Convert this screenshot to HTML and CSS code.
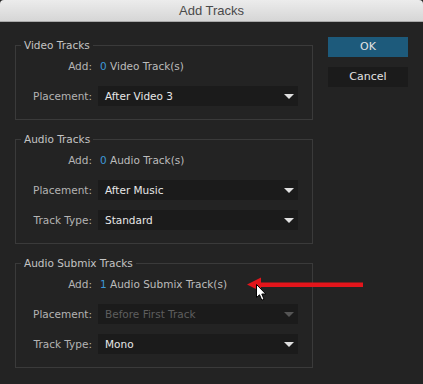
FILE: index.html
```html
<!DOCTYPE html>
<html>
<head>
<meta charset="utf-8">
<title>Add Tracks</title>
<link rel="stylesheet" href="styles.css">
</head>
<body>
<div class="window">
  <div class="titlebar">Add Tracks</div>
  <div class="content">
    <div class="panels">
      <fieldset class="group">
        <legend>Video Tracks</legend>
        <div class="row add-row">
          <span class="label">Add:</span>
          <span class="value"><span class="num">0</span> Video Track(s)</span>
        </div>
        <div class="row">
          <span class="label">Placement:</span>
          <div class="select"><span>After Video 3</span><span class="caret"></span></div>
        </div>
      </fieldset>
      <fieldset class="group">
        <legend>Audio Tracks</legend>
        <div class="row add-row">
          <span class="label">Add:</span>
          <span class="value"><span class="num">0</span> Audio Track(s)</span>
        </div>
        <div class="row">
          <span class="label">Placement:</span>
          <div class="select"><span>After Music</span><span class="caret"></span></div>
        </div>
        <div class="row">
          <span class="label">Track Type:</span>
          <div class="select"><span>Standard</span><span class="caret"></span></div>
        </div>
      </fieldset>
      <fieldset class="group">
        <legend>Audio Submix Tracks</legend>
        <div class="row add-row">
          <span class="label">Add:</span>
          <span class="value"><span class="num">1</span> Audio Submix Track(s)</span>
          <svg class="arrow" width="117" height="16" viewBox="0 0 117 16"><path d="M0 7.5 L14 0.5 L14 5.5 L116 5.5 L116 10 L14 10 L14 14.5 Z" fill="#e3151b"/></svg>
          <svg class="pointer" width="12" height="18" viewBox="0 0 12 18"><path d="M0.5 0.5 L0.5 13.5 L3.5 10.8 L5.8 16.2 L8 15.2 L5.8 10 L9.8 10 Z" fill="#fff" stroke="#000" stroke-width="1"/></svg>
        </div>
        <div class="row">
          <span class="label">Placement:</span>
          <div class="select disabled"><span>Before First Track</span><span class="caret"></span></div>
        </div>
        <div class="row">
          <span class="label">Track Type:</span>
          <div class="select"><span>Mono</span><span class="caret"></span></div>
        </div>
      </fieldset>
    </div>
    <div class="buttons">
      <div class="btn primary">OK</div>
      <div class="btn">Cancel</div>
    </div>
  </div>
</div>
</body>
</html>
```

FILE: styles.css
```css
* { box-sizing: border-box; }
html, body {
  margin: 0;
  padding: 0;
  width: 423px;
  height: 384px;
  overflow: hidden;
  background: #232323;
}
.window {
  width: 423px;
  height: 384px;
  background: #232323;
  font-family: "DejaVu Sans", "Liberation Sans", sans-serif;
  font-size: 10.5px;
  color: #b8b8b8;
}
.titlebar {
  height: 22px;
  background: linear-gradient(#ececec, #d6d6d6);
  border-bottom: 1px solid #a9a9a9;
  border-radius: 4px 4px 0 0;
  font-family: "Liberation Sans", Arial, sans-serif;
  font-size: 13px;
  color: #4a4a4a;
  text-align: center;
  line-height: 22px;
}
.content {
  display: flex;
  align-items: flex-start;
}
.panels {
  display: flex;
  flex-direction: column;
  gap: 13px;
  margin-left: 15px;
  margin-top: 17px;
}
.group {
  width: 298px;
  margin: 0;
  padding: 4px 14px 13px 0;
  border: 1px solid #3a3a3a;
  display: flex;
  flex-direction: column;
  gap: 10px;
  min-width: 0;
}
.group legend {
  margin-left: 5px;
  padding: 0 3px;
  line-height: 13px;
  font-size: 10.5px;
  color: #c4c4c4;
}
.row {
  display: grid;
  grid-template-columns: 76px 200px;
  column-gap: 6px;
  align-items: center;
  height: 20px;
}
.add-row {
  position: relative;
}
.label {
  text-align: right;
  color: #b4b4b4;
  white-space: nowrap;
}
.value {
  padding-left: 2px;
  color: #bcbcbc;
  white-space: nowrap;
}
.num { color: #3d97d8; }
.select {
  height: 20px;
  background: #1b1b1b;
  color: #e8e8e8;
  display: flex;
  align-items: center;
  justify-content: space-between;
  padding: 0 4px 0 7px;
  white-space: nowrap;
}
.select.disabled { color: #5e5e5e; }
.caret {
  width: 0;
  height: 0;
  border-left: 5px solid transparent;
  border-right: 5px solid transparent;
  border-top: 5px solid #e0e0e0;
}
.select.disabled .caret { border-top-color: #555; }
.arrow {
  position: absolute;
  left: 231px;
  top: 3px;
}
.pointer {
  position: absolute;
  left: 240px;
  top: 10px;
}
.buttons {
  display: flex;
  flex-direction: column;
  gap: 10px;
  margin-left: 15px;
  margin-top: 15px;
}
.btn {
  width: 80px;
  height: 20px;
  line-height: 20px;
  text-align: center;
  background: #1b1b1b;
  color: #e2e2e2;
  font-size: 11px;
}
.btn.primary { background: #1d5a7b; }
```
